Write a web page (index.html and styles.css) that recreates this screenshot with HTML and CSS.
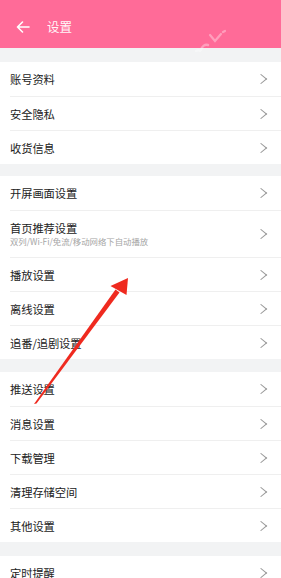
FILE: index.html
```html
<!DOCTYPE html>
<html lang="zh">
<head>
<meta charset="utf-8">
<title>设置</title>
<link rel="stylesheet" href="styles.css">
</head>
<body>
<div class="page">
  <header class="topbar">
    <svg class="back" width="14" height="12" viewBox="0 0 14 12"><path d="M13 6H1.5M6.5 1L1.5 6l5 5" fill="none" stroke="#fff" stroke-width="1.6" stroke-linecap="round" stroke-linejoin="round"/></svg>
    <span class="title">设置</span>
    <svg class="mark" width="40" height="30" viewBox="0 0 40 30"><path d="M22 13l5 6 6-7M35 10l2-1" fill="none" stroke="#fff" stroke-opacity=".35" stroke-width="2.2" stroke-linecap="round"/><path d="M13 28c1-4 4-6 7-5M8 29c2-1 3-1 4 0" fill="none" stroke="#fff" stroke-opacity=".35" stroke-width="2.4" stroke-linecap="round"/></svg>
  </header>

  <section class="group first">
    <div class="row"><span class="label">账号资料</span><i class="chev"></i></div>
    <div class="row"><span class="label">安全隐私</span><i class="chev"></i></div>
    <div class="row"><span class="label">收货信息</span><i class="chev"></i></div>
  </section>

  <section class="group g2">
    <div class="row"><span class="label">开屏画面设置</span><i class="chev"></i></div>
    <div class="row tall"><div class="texts"><span class="label">首页推荐设置</span><span class="sub">双列/Wi-Fi/免流/移动网络下自动播放</span></div><i class="chev"></i></div>
    <div class="row"><span class="label">播放设置</span><i class="chev"></i></div>
    <div class="row"><span class="label">离线设置</span><i class="chev"></i></div>
    <div class="row"><span class="label">追番/追剧设置</span><i class="chev"></i></div>
  </section>

  <section class="group g3">
    <div class="row"><span class="label">推送设置</span><i class="chev"></i></div>
    <div class="row"><span class="label">消息设置</span><i class="chev"></i></div>
    <div class="row"><span class="label">下载管理</span><i class="chev"></i></div>
    <div class="row"><span class="label">清理存储空间</span><i class="chev"></i></div>
    <div class="row"><span class="label">其他设置</span><i class="chev"></i></div>
  </section>

  <section class="group g4">
    <div class="row"><span class="label">定时提醒</span><i class="chev"></i></div>
  </section>

  <svg class="annot" width="281" height="578" viewBox="0 0 281 578">
    <polygon points="34,404 36.5,403.5 119.5,292.5 115.5,289.5" fill="#ef2a1f"/>
    <polygon points="128,278 110.5,286 126.5,295" fill="#ef2a1f"/>
  </svg>
</div>
</body>
</html>
```
FILE: styles.css
```css
* { box-sizing: border-box; }
html, body { margin: 0; padding: 0; }
body {
  background: #f2f3f4;
  font-family: "Noto Sans CJK SC", "Noto Sans", sans-serif;
  width: 281px;
  height: 578px;
  overflow: hidden;
}
.page { position: relative; width: 281px; height: 578px; overflow: hidden; }
.topbar {
  height: 48px;
  background: #ff6b98;
  display: flex;
  align-items: center;
  padding-left: 16px;
  padding-top: 5px;
  position: relative;
}
.back { display: block; margin-top: 1px; }
.title {
  color: #fff;
  font-size: 12.5px;
  margin-left: 17px;
  opacity: .95;
}
.mark { position: absolute; left: 188px; top: 22px; }
.group {
  background: #fff;
  margin-top: 13px;
}
.group.first { margin-top: 14px; }
.group.g2 { margin-top: 12px; }
.group.g4 { margin-top: 14px; }
.row {
  margin-left: 10px;
  height: 34px;
  display: flex;
  align-items: center;
  justify-content: space-between;
  padding-right: 14px;
}
.row + .row { border-top: 1px solid #efefef; }
.row.tall { height: 47px; }
.label {
  font-size: 11.3px;
  color: #222;
  letter-spacing: -0.1px;
}
.texts { display: flex; flex-direction: column; }
.texts .label { line-height: 15px; }
.sub {
  font-size: 8.4px;
  color: #a5a5a5;
  line-height: 11px;
}
.chev {
  display: block;
  width: 8px;
  height: 8px;
  border-top: 1px solid #999;
  border-right: 1px solid #999;
  transform: rotate(45deg) skew(-6deg, -6deg);
  margin-right: 2px;
}
.annot { position: absolute; left: 0; top: 0; pointer-events: none; }
```
